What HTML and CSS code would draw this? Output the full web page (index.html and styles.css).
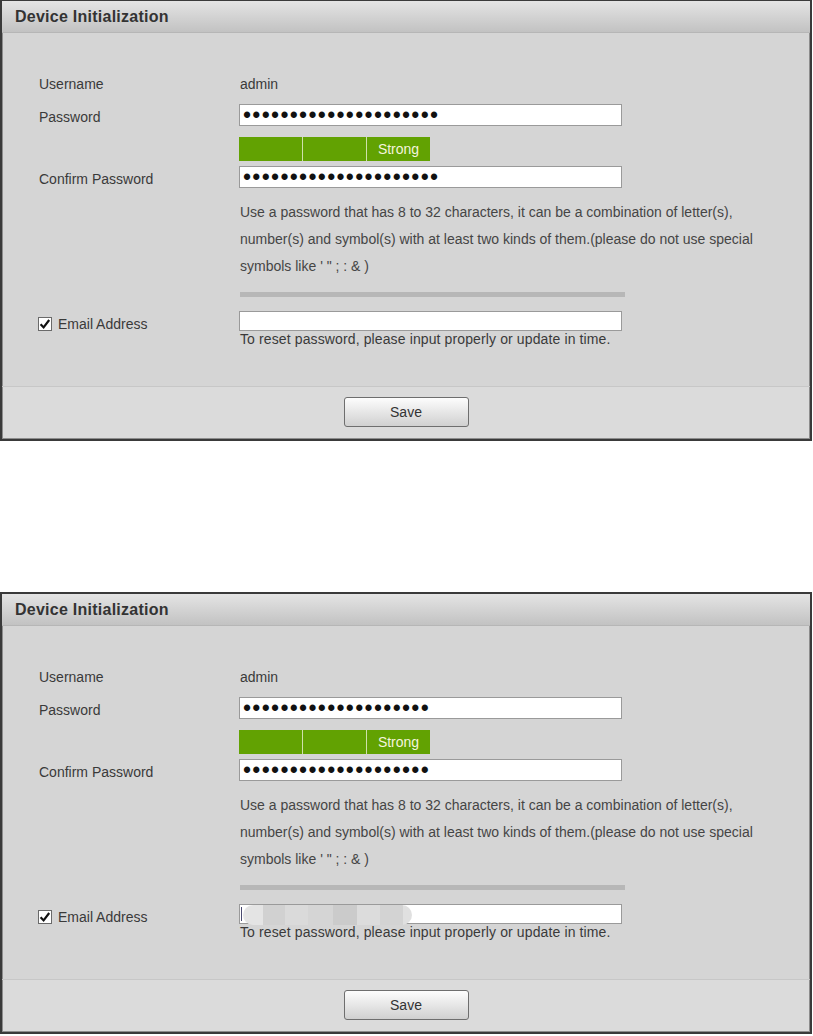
FILE: index.html
```html
<!DOCTYPE html>
<html lang="en">
<head>
    <meta charset="UTF-8">
    <meta name="viewport" content="width=device-width, initial-scale=1.0">
    <title>Device Initialization</title>
    <link rel="stylesheet" href="styles.css">
</head>
<body>
    <!-- Step 1: email empty -->
    <section class="panel panel-first">
        <div class="panel-head">Device Initialization</div>
        <form class="panel-body">
            <div class="row">
                <span class="label">Username</span>
                <span class="value">admin</span>
            </div>
            <div class="row row-field row-pwd">
                <label class="label" for="pwd1">Password</label>
                <input class="field field-pwd" type="password" id="pwd1" value="abcdefghijklmnopqrstu" readonly>
            </div>
            <div class="row row-strength">
                <span class="label"></span>
                <div class="strength"><span></span><span></span><span>Strong</span></div>
            </div>
            <div class="row row-field row-confirm">
                <label class="label" for="cfm1">Confirm Password</label>
                <input class="field field-pwd" type="password" id="cfm1" value="abcdefghijklmnopqrstu" readonly>
            </div>
            <div class="row row-tip">
                <span class="label"></span>
                <p class="tip">Use a password that has 8 to 32 characters, it can be a combination of letter(s), number(s) and symbol(s) with at least two kinds of them.(please do not use special symbols like ' " ; : &amp; )</p>
            </div>
            <div class="row row-divider">
                <span class="label"></span>
                <div class="divider"></div>
            </div>
            <div class="row row-email">
                <label class="label check">
                    <span class="check-box">
                        <svg width="14" height="14" viewBox="0 0 14 14">
                            <rect x="0.5" y="0.5" width="13" height="13" fill="#fff" stroke="#6a6a6a"/>
                            <path d="M2.6 7.2 L5.6 10.4 L11.2 3" fill="none" stroke="#111" stroke-width="2.2"/>
                        </svg>
                    </span>
                    Email Address
                </label>
                <div class="email">
                    <input class="field field-email" type="text">
                    <p class="hint">To reset password, please input properly or update in time.</p>
                </div>
            </div>
        </form>
        <div class="panel-foot">
            <button class="btn" type="button">Save</button>
        </div>
    </section>

    <!-- Step 2: email filled (blurred) -->
    <section class="panel">
        <div class="panel-head">Device Initialization</div>
        <form class="panel-body">
            <div class="row">
                <span class="label">Username</span>
                <span class="value">admin</span>
            </div>
            <div class="row row-field row-pwd">
                <label class="label" for="pwd2">Password</label>
                <input class="field field-pwd" type="password" id="pwd2" value="abcdefghijklmnopqrst" readonly>
            </div>
            <div class="row row-strength">
                <span class="label"></span>
                <div class="strength"><span></span><span></span><span>Strong</span></div>
            </div>
            <div class="row row-field row-confirm">
                <label class="label" for="cfm2">Confirm Password</label>
                <input class="field field-pwd" type="password" id="cfm2" value="abcdefghijklmnopqrst" readonly>
            </div>
            <div class="row row-tip">
                <span class="label"></span>
                <p class="tip">Use a password that has 8 to 32 characters, it can be a combination of letter(s), number(s) and symbol(s) with at least two kinds of them.(please do not use special symbols like ' " ; : &amp; )</p>
            </div>
            <div class="row row-divider">
                <span class="label"></span>
                <div class="divider"></div>
            </div>
            <div class="row row-email">
                <label class="label check">
                    <span class="check-box">
                        <svg width="14" height="14" viewBox="0 0 14 14">
                            <rect x="0.5" y="0.5" width="13" height="13" fill="#fff" stroke="#6a6a6a"/>
                            <path d="M2.6 7.2 L5.6 10.4 L11.2 3" fill="none" stroke="#111" stroke-width="2.2"/>
                        </svg>
                    </span>
                    Email Address
                </label>
                <div class="email">
                    <input class="field field-email" type="text">
                    <span class="caret"></span>
                    <span class="blur"></span>
                    <p class="hint">To reset password, please input properly or update in time.</p>
                </div>
            </div>
        </form>
        <div class="panel-foot">
            <button class="btn" type="button">Save</button>
        </div>
    </section>
</body>
</html>
```

FILE: styles.css
```css
/* Global */
* {
    margin: 0;
    padding: 0;
    box-sizing: border-box;
}

body {
    background: #fff;
    font-family: "Liberation Sans", Arial, sans-serif;
    font-size: 14px;
    color: #333;
}

/* Panel */
.panel {
    width: 812px;
    border: 2px solid #3a3a3a;
    background: #d5d5d5;
}

.panel-first {
    margin-top: -1px;
}

.panel + .panel {
    margin-top: 151px;
}

.panel-head {
    height: 32px;
    padding-left: 13px;
    line-height: 31px;
    font-size: 16px;
    font-weight: bold;
    letter-spacing: 0.25px;
    color: #333;
    background: linear-gradient(#e4e4e4, #c2c2c2);
    border-bottom: 1px solid #b6b6b6;
}

.panel-body {
    padding: 40px 0 39px 37px;
    border-bottom: 1px solid #c7c7c7;
    box-shadow: inset 1px 0 #8d8d8d, inset -1px 0 #8d8d8d;
}

/* Rows */
.row {
    display: flex;
    align-items: center;
    min-height: 22px;
}

.label {
    width: 200px;
    flex: none;
    color: #3a3a3a;
}

.row-field .label {
    padding-top: 4px;
}

.value {
    padding-left: 1px;
    color: #3a3a3a;
}

.row-pwd { margin-top: 9px; }
.row-strength { margin-top: 11px; }
.row-confirm { margin-top: 5px; }
.row-tip { margin-top: 11px; }
.row-divider { margin-top: 12px; min-height: 0; }
.row-email { margin-top: 14px; align-items: flex-start; }

/* Inputs */
.field {
    display: block;
    width: 383px;
    border: 1px solid #9a9a9a;
    background: #fff;
    outline: none;
}

.field-pwd {
    height: 22px;
    padding: 0 3px;
    font-family: "Liberation Sans", Arial, sans-serif;
    font-size: 23px;
    line-height: 20px;
    letter-spacing: 1.3px;
    color: #111;
}

.field-email {
    height: 20px;
    padding: 0 3px;
    font-size: 14px;
}

/* Strength meter */
.strength {
    display: flex;
    gap: 1px;
    width: 191px;
    height: 24px;
    background: #cfe1ab;
}

.strength span {
    flex: 1;
    background: #62a202;
    color: #f4f4de;
    text-align: center;
    line-height: 24px;
}

/* Tip text */
.tip {
    width: 545px;
    padding-left: 1px;
    line-height: 27px;
    color: #454545;
}

.divider {
    width: 385px;
    height: 5px;
    margin-left: 1px;
    background: #b7b7b7;
}

/* Email */
.check {
    display: flex;
    align-items: center;
    gap: 6px;
    width: 201px;
    height: 15px;
    margin-top: 5px;
    margin-left: -1px;
}

.check-box {
    display: block;
    width: 14px;
    height: 14px;
}

.check-box svg {
    display: block;
}

.email {
    position: relative;
}

.hint {
    padding-left: 1px;
    line-height: 16px;
    letter-spacing: 0.12px;
    color: #3a3a3a;
}

.caret {
    position: absolute;
    left: 2px;
    top: 3px;
    width: 1px;
    height: 14px;
    background: #4a4a70;
}

.blur {
    position: absolute;
    left: 4px;
    top: 1px;
    width: 169px;
    height: 20px;
    border-radius: 10px;
    filter: blur(0.7px);
    background: linear-gradient(90deg,
        #e4e4e4 0, #e4e4e4 20px,
        #d1d1d1 20px, #d1d1d1 42px,
        #dadada 42px, #dadada 65px,
        #d5d5d5 65px, #d5d5d5 90px,
        #cbcbcb 90px, #cbcbcb 114px,
        #dcdcdc 114px, #dcdcdc 137px,
        #d3d3d3 137px, #d3d3d3 160px,
        #e0e0e0 160px);
}

/* Footer */
.panel-foot {
    padding: 10px 0 12px;
    text-align: center;
    background: #dbdbdb;
    box-shadow: inset 1px 0 #8d8d8d, inset -1px 0 #8d8d8d, inset 0 -1px #8d8d8d;
}

.btn {
    width: 125px;
    height: 30px;
    border: 1px solid #6e6e6e;
    border-radius: 3px;
    background: linear-gradient(#fdfdfd, #d0d0d0);
    font-family: "Liberation Sans", Arial, sans-serif;
    font-size: 14px;
    color: #333;
    cursor: pointer;
}
```
